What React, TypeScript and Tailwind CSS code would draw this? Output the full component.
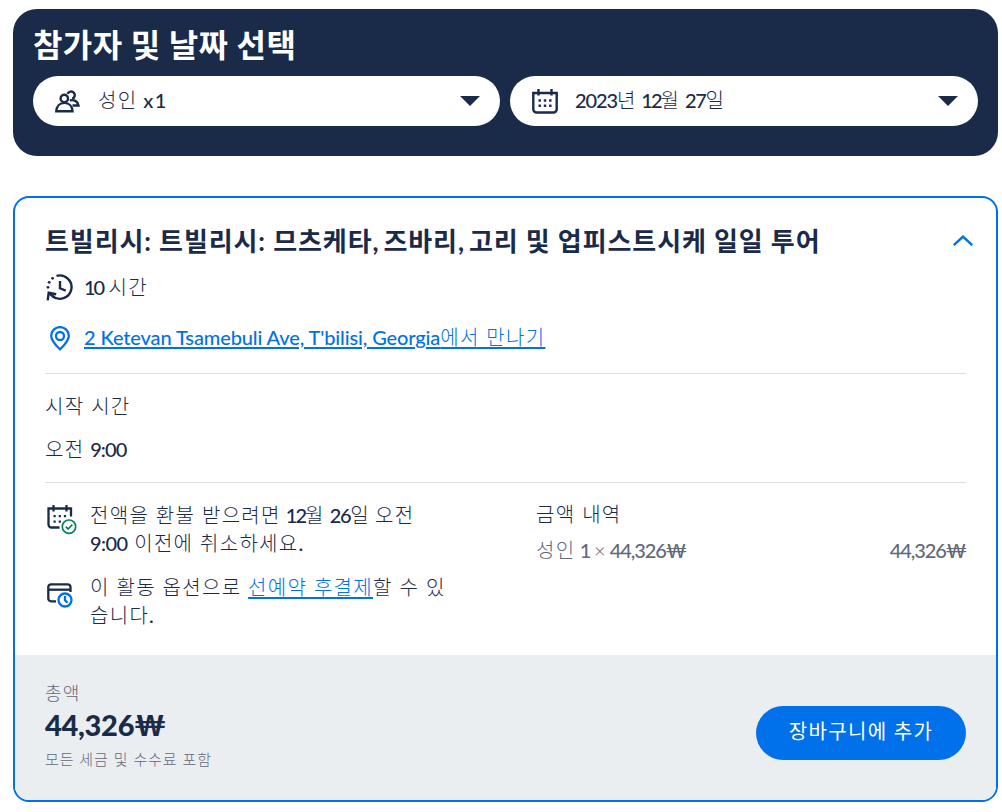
import React from 'react';

const Num: React.FC<{ children: React.ReactNode; className?: string }> = ({ children, className = 'tracking-[-0.9px]' }) => (
  <span className={`font-medium ${className}`}>{children}</span>
);

const Comma: React.FC = () => <span className="tracking-[-0.7px]">, </span>;

const Caret: React.FC = () => (
  <svg width="20" height="10" viewBox="0 0 20 10" className="shrink-0">
    <path d="M0 0h20L10 10z" fill="#1a2b49" />
  </svg>
);

const PeopleIcon: React.FC = () => (
  <svg width="26" height="24" viewBox="0 0 26 24" fill="none" stroke="#1a2b49" strokeWidth="2.4" className="shrink-0">
    <path d="M12.600 4.900a3.700 3.700 0 1 1 4.600 4.800" />
    <circle cx="9.300" cy="9.400" r="3.700" />
    <path d="M1.300 22.300c.2-4.800 3.300-8.400 8.100-8.400s7.900 3.600 8.100 8.400z" />
    <path d="M14.800 11.400c4.800-1.100 8.200 1.300 8.700 5.100h-6" />
  </svg>
);

const CalendarIcon: React.FC = () => (
  <svg width="26" height="25" viewBox="0 0 26 25" fill="none" stroke="#1a2b49" strokeWidth="2.4" className="shrink-0">
    <path d="M1.300 4h23.400v16.300a3.200 3.200 0 0 1-3.200 3.200h-17a3.200 3.200 0 0 1-3.200-3.200z" />
    <path d="M6.500 0v6.500M19.500 0v6.500" />
    <path d="M6.500 11.500h13M6.500 16.800h13" strokeDasharray="2.400 2.900" />
  </svg>
);

const DurationIcon: React.FC = () => (
  <svg width="28" height="27" viewBox="0 0 28 27" fill="none" stroke="#1a2b49" strokeWidth="2.4" className="shrink-0">
    <path d="M10.500 1.900A11.700 11.700 0 1 1 6.200 22" />
    <path d="M14 7v7.300l5.700 2.400" />
    <path d="M1.700 26.300l1-7.500 7.500 1.500" />
    <path d="M3 19.200l4.500 3.600" />
    <g fill="#1a2b49" stroke="none">
      <circle cx="6.600" cy="4.300" r="1.400" />
      <circle cx="3.200" cy="8.300" r="1.400" />
      <circle cx="2" cy="13.300" r="1.400" />
    </g>
  </svg>
);

const PinIcon: React.FC = () => (
  <svg width="20" height="25" viewBox="0 0 20 25" fill="none" stroke="#0071eb" strokeWidth="2.3" className="shrink-0">
    <path d="M10 23.300C6.300 19.700 1.200 14.900 1.200 9.900a8.800 8.800 0 0 1 17.600 0c0 5-5.100 9.800-8.800 13.400z" />
    <circle cx="10" cy="10" r="4" />
  </svg>
);

const CancelIcon: React.FC = () => (
  <svg width="30" height="30" viewBox="0 0 30 30" fill="none" stroke="#1a2b49" strokeWidth="2.3" className="shrink-0">
    <path d="M24 11.500V3.500H1.500v16a3 3 0 0 0 3 3H12.500" />
    <path d="M6.500 0v6.500M19.500 0v6.500" />
    <path d="M6.500 11.200h13M6.500 16.600h8" strokeDasharray="2.200 3" />
    <circle cx="22" cy="21.700" r="6.700" stroke="#078554" strokeWidth="1.700" />
    <path d="M18.800 21.700l2.300 2.400 4.200-4.400" stroke="#078554" strokeWidth="1.700" />
  </svg>
);

const PayLaterIcon: React.FC = () => (
  <svg width="26" height="25" viewBox="0 0 26 25" fill="none" stroke="#1a2b49" strokeWidth="2.3" className="shrink-0">
    <path d="M23.500 9V4a2.700 2.700 0 0 0-2.700-2.700H4A2.700 2.700 0 0 0 1.300 4v11.600A2.700 2.700 0 0 0 4 18.300h5" />
    <path d="M1.300 6.700h22.200" />
    <g stroke="#0071eb">
      <circle cx="18" cy="17" r="6.500" />
      <path d="M18 13v4.200l2.600 2.600" />
    </g>
  </svg>
);

const App: React.FC = () => {
  return (
    <div className="h-[812px] w-[1002px] bg-white pt-[9px] pl-[13px] font-['Lato','Noto_Sans_CJK_KR',sans-serif] text-[20px] font-light tracking-[1.3px] whitespace-nowrap text-[#1a2b49]">
      <section className="h-[147px] w-[985px] rounded-[24px] bg-[#1a2b49] px-5 pt-[13px]">
        <h1 className="h-[54px] text-[32px] leading-[46px] font-bold tracking-[0.4px] text-white">참가자 및 날짜 선택</h1>
        <div className="flex gap-[10px]">
          <button className="flex h-[50px] w-[467px] items-center rounded-full bg-white pr-5 pl-[22px]">
            <PeopleIcon />
            <span className="ml-[17px] flex-1 pb-[3px] text-left [word-spacing:-1px]">성인 <Num className="tracking-[-1.2px]">x 1</Num></span>
            <Caret />
          </button>
          <button className="flex h-[50px] w-[468px] items-center rounded-full bg-white pr-5 pl-[22px]">
            <CalendarIcon />
            <span className="ml-[17px] flex-1 pb-[3px] text-left tracking-[1px] [word-spacing:-1.5px]">
              <Num className="tracking-[-1.1px]">2023</Num>년 <Num className="tracking-[-2px]">12</Num>월 <Num className="tracking-[-1.3px]">27</Num>일
            </span>
            <Caret />
          </button>
        </div>
      </section>

      <section className="mt-10 h-[606px] w-[985px] overflow-hidden rounded-[16px] border-2 border-[#0071eb]">
        <div className="h-[457px] px-[30px] pt-5">
          <div className="flex h-[46px] items-center justify-between">
            <h2 className="text-[26px] font-bold tracking-[0.9px]">트빌리시: 트빌리시: 므츠케타<Comma />즈바리<Comma />고리 및 업피스트시케 일일 투어</h2>
            <svg width="20" height="11" viewBox="0 0 20 11" fill="none" stroke="#0071eb" strokeWidth="2.4" className="mr-[-7px] mb-[2px]">
              <path d="M.8 10.200L10 1.600l9.200 8.600" />
            </svg>
          </div>
          <div className="flex h-[46px] items-center gap-[10px] pl-[1px]">
            <DurationIcon />
            <span className="[word-spacing:-1.5px]"><Num className="tracking-[-2px]">10</Num> 시간</span>
          </div>
          <div className="flex h-[56px] items-center gap-[14px] pl-[5px] text-[#0071eb]">
            <PinIcon />
            <a className="pb-[2px] underline decoration-2 underline-offset-2"><Num className="tracking-[-0.12px]">2 Ketevan Tsamebuli Ave, T'bilisi, Georgia</Num>에서 만나기</a>
          </div>

          <div className="mt-[7px] h-[110px] border-y border-[#dcdfe4]">
            <div className="h-[64px] leading-[64px]">시작 시간</div>
            <div className="leading-[22px] [word-spacing:-1px]">오전 <Num>9:00</Num></div>
          </div>

          <div className="flex leading-7">
            <div className="w-[491px] pt-[18px]">
              <div className="flex items-start gap-[13px] pl-[2px]">
                <div className="pt-1"><CancelIcon /></div>
                <p>전액을 환불 받으려면<span className="[word-spacing:-1.7px]"> <Num className="tracking-[-2px]">12</Num>월 <Num className="tracking-[-1.3px]">26</Num>일 오전</span><br /><Num className="tracking-[-0.6px]">9:00</Num> 이전에 취소하세요<Num>.</Num></p>
              </div>
              <div className="mt-4 flex items-start gap-[17px] pl-[2px]">
                <div className="pt-[10px]"><PayLaterIcon /></div>
                <p>이 활동 옵션으로 <a className="text-[#0071eb] underline decoration-2 underline-offset-2">선예약 후결제</a>할 수 있<br />습니다<Num>.</Num></p>
              </div>
            </div>
            <div className="flex-1 pt-[17px]">
              <div>금액 내역</div>
              <div className="mt-2 flex justify-between text-[#63687a]">
                <span className="[word-spacing:-2.5px]">성인 <Num className="tracking-[-1.5px]">1</Num> <span className="tracking-normal">×</span> <Num className="tracking-[-1.1px]">44,326₩</Num></span>
                <Num className="tracking-[-1.1px]">44,326₩</Num>
              </div>
            </div>
          </div>
        </div>

        <div className="flex h-[145px] justify-between bg-[#ebeef1] px-[30px]">
          <div className="pt-[26px] text-[#63687a]">
            <div className="text-[18px] leading-6">총액</div>
            <div className="h-[42px] text-[29px] leading-[40px] font-black tracking-[-0.3px] text-[#1a2b49]">44,326₩</div>
            <div className="text-[15px] leading-6 tracking-[0.9px]">모든 세금 및 수수료 포함</div>
          </div>
          <button className="mt-[51px] h-[54px] w-[210px] rounded-full bg-[#0071eb] pb-1 font-normal text-white">장바구니에 추가</button>
        </div>
      </section>
    </div>
  );
};

export default App;
